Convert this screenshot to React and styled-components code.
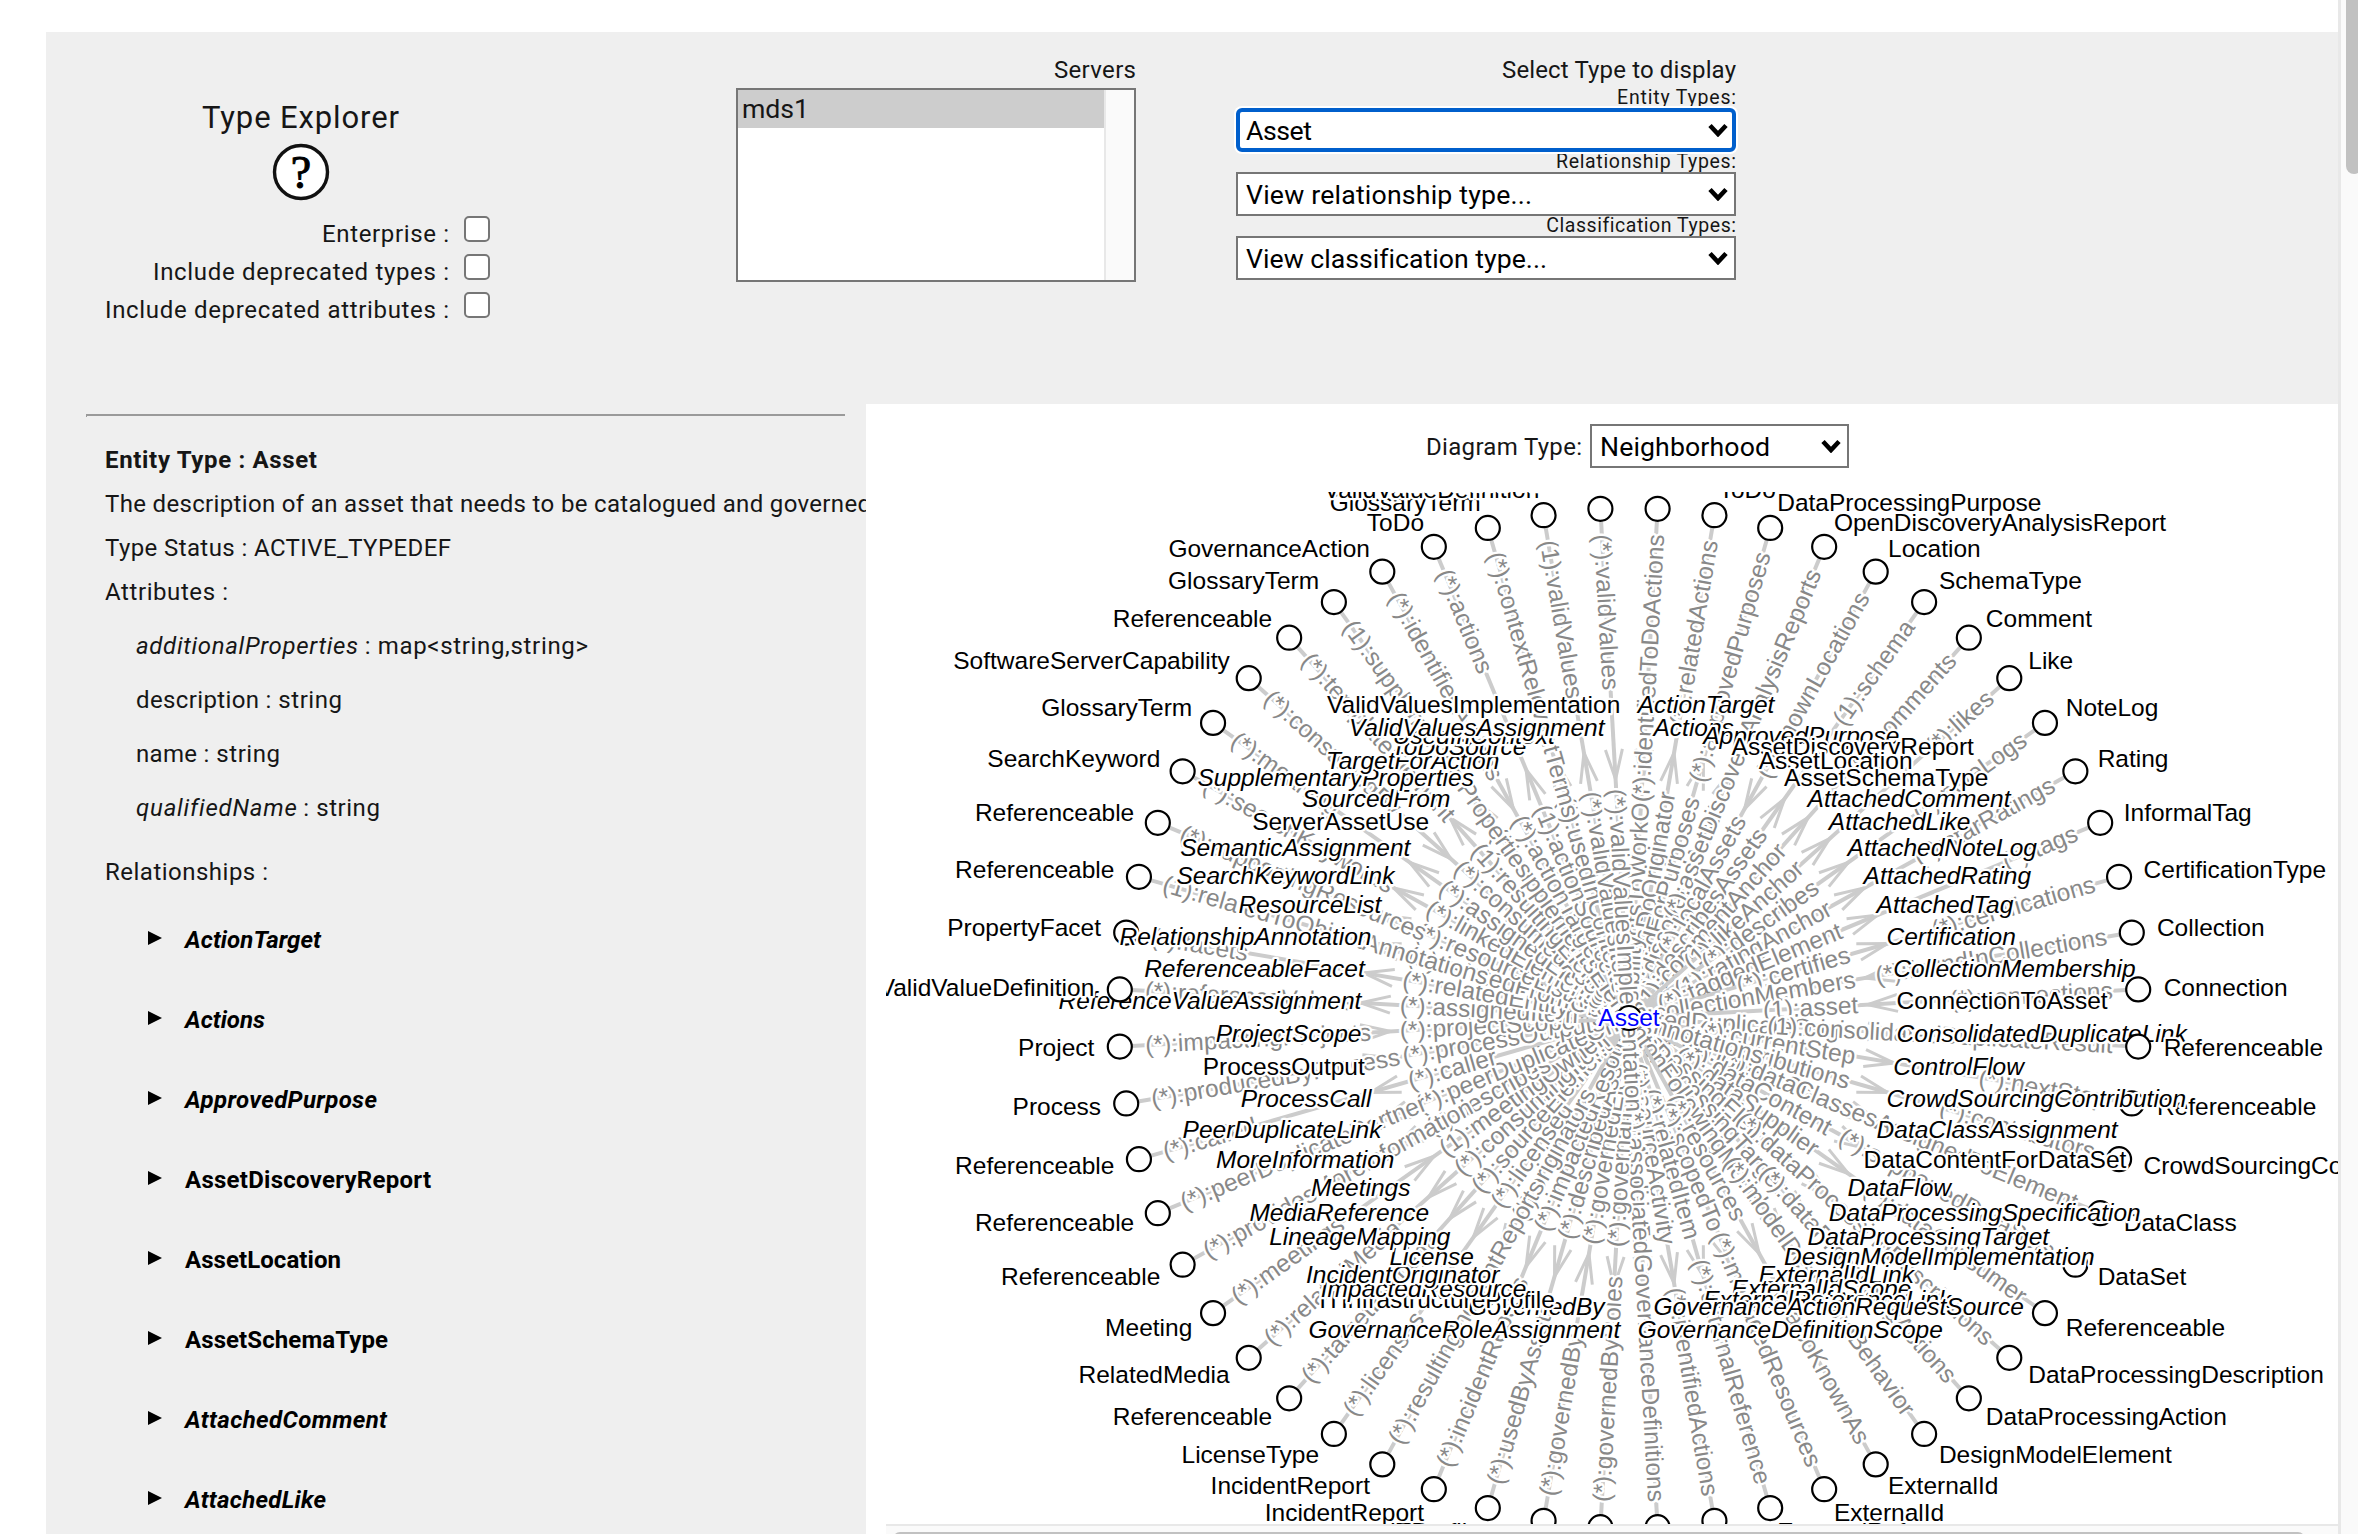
import React, { useLayoutEffect, useRef, useState } from "react";
import styled, { createGlobalStyle, css } from "styled-components";

const GlobalStyle = createGlobalStyle`
  * { box-sizing: border-box; }
  html, body { margin: 0; padding: 0; background: #fff; overflow: hidden; }
  body { font-family: Roboto, "Noto Sans", sans-serif; color: #161616; }
`;

const Page = styled.div`
  display: flex;
  width: 2358px;
  height: 1534px;
  overflow: hidden;
`;
const Main = styled.main`
  display: flex;
  flex-direction: column;
  width: 2292px;
  margin: 32px 0 0 46px;
  background: #efefef;
`;
const PageScroll = styled.div`
  width: 20px;
  height: 1534px;
  border-left: 3px solid #e8e8e8;
  background: #fafafa;
  padding-left: 5px;
  overflow: hidden;
`;
const PageThumb = styled.div`
  width: 16px;
  height: 174px;
  border-radius: 0 0 8px 8px;
  background: #c1c1c1;
`;

/* ---------- header ---------- */
const Header = styled.header`
  display: flex;
  height: 372px;
`;
const TitleColumn = styled.div`
  display: flex;
  flex-direction: column;
  align-items: center;
  width: 509px;
  padding-top: 66px;
`;
const Title = styled.h1`
  margin: 0 0 5px;
  font-size: 31px;
  font-weight: 400;
  line-height: 40px;
  white-space: nowrap;
`;
const HelpIcon = styled.svg`
  display: block;
  width: 58px;
  height: 58px;
  margin-bottom: 9px;
`;
const HelpGlyph = styled.text`
  font: 400 46px "Liberation Serif", serif;
  text-anchor: middle;
  stroke: #000;
  stroke-width: 1px;
`;
const Options = styled.div`
  align-self: flex-start;
  width: 444px;
`;
const OptionRow = styled.label`
  display: flex;
  justify-content: flex-end;
  height: 38px;
  gap: 15px;
`;
const OptionText = styled.span`
  margin-top: 10px;
  font-size: 24px;
  line-height: 29px;
  white-space: nowrap;
`;
const Checkbox = styled.span`
  width: 26px;
  height: 26px;
  margin-top: 6px;
  border: 2px solid #767676;
  border-radius: 5px;
  background: #fff;
`;
const Column = styled.div`
  display: flex;
  flex-direction: column;
  align-items: stretch;
  width: ${(p) => p.$width}px;
  margin-left: ${(p) => p.$gap}px;
  padding-top: 24px;
`;
const ColumnTitle = styled.div`
  margin-bottom: 4px;
  font-size: 24px;
  line-height: 28px;
  text-align: right;
  white-space: nowrap;
`;
const ListBox = styled.div`
  display: flex;
  height: 194px;
  border: 2px solid #767676;
  background: #fff;
`;
const ListItems = styled.div`
  flex: 1;
`;
const ListItem = styled.div`
  height: 38px;
  padding-left: 4px;
  background: #cdcdcd;
  font-size: 26.67px;
  line-height: 38px;
`;
const ListScroll = styled.div`
  width: 30px;
  border-left: 2px solid #e8e8e8;
  background: #fafafa;
`;
const SelectLabel = styled.div`
  height: 20px;
  font-size: 19.5px;
  line-height: 20px;
  text-align: right;
  white-space: nowrap;
`;
const TypeSelects = styled.div`
  width: 500px;
`;
const SelectBox = styled.div`
  position: relative;
  display: flex;
  align-items: center;
  justify-content: space-between;
  width: ${(p) => p.$width}px;
  height: 44px;
  padding: 0 6px 0 8px;
  border: 2px solid #767676;
  background: #fff;
  color: #000;
  font-size: 26.67px;
  line-height: 40px;
  white-space: nowrap;
  ${(p) =>
    p.$focused &&
    css`
      padding: 0 4px 0 6px;
      border: 4px solid #005fcc;
      border-radius: 6px;
      line-height: 36px;
      box-shadow: 0 0 0 2px #fff;
    `}
`;
const SelectValue = styled.span`
  padding-top: 1px;
`;
const Chevron = styled.svg`
  width: 20px;
  height: 14px;
  fill: none;
  stroke: #000;
  stroke-width: 4.6;
`;

/* ---------- details panel ---------- */
const Body = styled.div`
  display: flex;
  height: 1130px;
`;
const Details = styled.section`
  width: 820px;
  overflow: hidden;
  white-space: nowrap;
  font-size: 24px;
`;
const Rule = styled.hr`
  width: 759px;
  height: 3px;
  margin: 10px 0 21px 40px;
  border: 0;
  border-top: 2px solid #9a9a9a;
  border-left: 1px solid #9a9a9a;
`;
const Line = styled.div`
  height: 44px;
  padding-left: 59px;
  line-height: 44px;
  font-weight: ${(p) => (p.$bold ? 700 : 400)};
`;
const Attributes = styled.div`
  padding: 5px 0 15px 90px;
`;
const Attribute = styled.div`
  height: 54px;
  line-height: 54px;
`;
const Relationships = styled.div`
  padding: 6px 0 0 102px;
`;
const Relationship = styled.div`
  display: flex;
  align-items: center;
  gap: 23px;
  height: 80px;
  color: #000;
  font-weight: 700;
  font-style: ${(p) => (p.$italic ? "italic" : "normal")};
`;
const Triangle = styled.span`
  width: 0;
  height: 0;
  margin-top: -4px;
  border-style: solid;
  border-width: 7px 0 7px 14px;
  border-color: transparent transparent transparent #000;
`;

/* ---------- diagram panel ---------- */
const DiagramPanel = styled.section`
  display: flex;
  flex-direction: column;
  width: 1472px;
  background: #fff;
`;
const DiagramBar = styled.div`
  display: flex;
  align-items: center;
  gap: 8px;
  height: 88px;
  padding: 20px 0 24px 560px;
  font-size: 24px;
`;
const BarLabel = styled.span`
  padding-top: 1px;
  line-height: 44px;
  white-space: nowrap;
`;
const Canvas = styled.svg`
  display: block;
  width: 1452px;
  height: 1032px;
  margin-left: 20px;
  font-family: "Liberation Sans", Arial, sans-serif;
  font-size: 24.5px;
`;
const CanvasScroll = styled.div`
  height: 10px;
  margin-left: 20px;
  padding: 6px 0 0 7px;
  border-top: 2px solid #e8e8e8;
  background: #fafafa;
  overflow: hidden;
`;
const CanvasThumb = styled.div`
  width: 1412px;
  height: 14px;
  border-radius: 7px;
  background: #c1c1c1;
`;
const Link = styled.line`
  stroke: #ccc;
  stroke-width: 4;
`;
const Arrow = styled.path`
  fill: none;
  stroke: #ccc;
  stroke-width: 3;
`;
const halo = css`
  paint-order: stroke;
  stroke: #fff;
  stroke-width: 4.6px;
  stroke-linejoin: round;
`;
const RoleText = styled.text`
  ${halo}
  fill: #888;
`;
const Label = styled.text`
  ${halo}
  fill: ${(p) => p.$color || "#000"};
  font-style: ${(p) => (p.$italic ? "italic" : "normal")};
`;
const NodeCircle = styled.circle`
  fill: #fff;
  stroke: #000;
  stroke-width: 2.2;
`;

/* Tracks its text so that it fills the given measure. */
function Tracked({ width, children }) {
  const ref = useRef(null);
  const [spacing, setSpacing] = useState(0);
  useLayoutEffect(() => {
    const natural = ref.current.getBoundingClientRect().width;
    setSpacing((width - natural) / (ref.current.textContent.length - 1));
  }, [width]);
  return (
    <span ref={ref} style={{ letterSpacing: spacing, marginRight: -spacing }}>
      {children}
    </span>
  );
}

// [relationship, neighbour, inner role, outer role, upright name, arrow points inwards]
const LINKS = [
  ["ActionTarget", "ToDo", "(*):elementsToWorkOn", "(*):identifiedToDoActions", 0, 1],
  ["Actions", "ToDo", "(1):toDoOriginator", "(*):relatedActions"],
  ["ApprovedPurpose", "DataProcessingPurpose", "(*):approvedForPurposes", "(*):approvedPurposes"],
  ["AssetDiscoveryReport", "OpenDiscoveryAnalysisReport", "(1):discoveredAsset", "(*):assetDiscoveryAnalysisReports", 1],
  ["AssetLocation", "Location", "(*):localAssets", "(*):knownLocations", 1, 1],
  ["AssetSchemaType", "SchemaType", "(1):describesAssets", "(1):schema", 1],
  ["AttachedComment", "Comment", "(1):commentAnchor", "(*):comments"],
  ["AttachedLike", "Like", "(1):likeAnchor", "(*):likes"],
  ["AttachedNoteLog", "NoteLog", "(*):describes", "(*):noteLogs"],
  ["AttachedRating", "Rating", "(1):ratingAnchor", "(*):starRatings"],
  ["AttachedTag", "InformalTag", "(*):taggedElement", "(*):tags"],
  ["Certification", "CertificationType", "(*):certifies", "(*):certifications"],
  ["CollectionMembership", "Collection", "(*):collectionMembers", "(*):foundInCollections", 0, 1],
  ["ConnectionToAsset", "Connection", "(1):asset", "(*):connections", 1, 1],
  ["ConsolidatedDuplicateLink", "Referenceable", "(*):consolidatedDuplicateOrigin", "(1):consolidatedDuplicateResult"],
  ["ControlFlow", "Referenceable", "(*):currentStep", "(*):nextStep"],
  ["CrowdSourcingContribution", "CrowdSourcingContributor", "(*):contributions", "(*):contributors"],
  ["DataClassAssignment", "DataClass", "(*):elementsAssignedToDataClass", "(*):dataClassesAssignedToElement"],
  ["DataContentForDataSet", "DataSet", "(*):dataContent", "(*):supportedDataSets", 1],
  ["DataFlow", "Referenceable", "(*):dataSupplier", "(*):dataConsumer"],
  ["DataProcessingSpecification", "DataProcessingDescription", "(*):dataProcessingElements", "(*):dataProcessingDescriptions"],
  ["DataProcessingTarget", "DataProcessingAction", "(*):dataProcessingTarget", "(*):dataProcessingActions"],
  ["DesignModelImplementation", "DesignModelElement", "(*):implementationFollowingModel", "(*):modelDescribingBehavior"],
  ["ExternalIdLink", "ExternalId", "(*):resources", "(*):alsoKnownAs"],
  ["ExternalIdScope", "ExternalId", "(*):scopedTo", "(*):managedResources"],
  ["ExternalReferenceLink", "ExternalReference", "(*):relatedItem", "(*):externalReference"],
  ["GovernanceActionRequestSource", "GovernanceAction", "(*):sourceActivity", "(*):identifiedActions"],
  ["GovernanceDefinitionScope", "GovernanceDefinition", "(*):definitionAppliesTo", "(*):associatedGovernanceDefinitions"],
  ["GovernanceRoleAssignment", "PersonRole", "(*):governanceResponsibility", "(*):governedByRoles"],
  ["GovernedBy", "GovernanceDefinition", "(*):governedElements", "(*):governedBy", 0, 1],
  ["ITInfrastructureProfile", "ITProfile", "(*):describedAssets", "(*):usedByAssets", 1],
  ["ImpactedResource", "IncidentReport", "(*):impactedResources", "(*):incidentReports"],
  ["IncidentOriginator", "IncidentReport", "(*):originators", "(*):resultingIncidentReports"],
  ["License", "LicenseType", "(*):licensed", "(*):licenses"],
  ["LineageMapping", "Referenceable", "(*):sourceElement", "(*):targetElement"],
  ["MediaReference", "RelatedMedia", "(*):consumingItem", "(*):relatedMedia"],
  ["Meetings", "Meeting", "(1):meetingOwner", "(*):meetings", 0, 1],
  ["MoreInformation", "Referenceable", "(*):describes", "(*):providesMoreInformation"],
  ["PeerDuplicateLink", "Referenceable", "(*):peerDuplicateOrigin", "(*):peerDuplicatePartner"],
  ["ProcessCall", "Referenceable", "(*):caller", "(*):called"],
  ["ProcessOutput", "Process", "(*):processOutputs", "(*):producedByProcess", 1, 1],
  ["ProjectScope", "Project", "(*):projectScope", "(*):impactingProjects", 0, 1],
  ["ReferenceValueAssignment", "ValidValueDefinition", "(*):assignedItem", "(*):referenceValues"],
  ["ReferenceableFacet", "PropertyFacet", "(*):relatedEntity", "(*):facets"],
  ["RelationshipAnnotation", "Referenceable", "(1):relatedFromObjectAnnotations", "(1):relatedToObjectAnnotations"],
  ["ResourceList", "Referenceable", "(*):resourceListAnchors", "(*):supportingResources"],
  ["SearchKeywordLink", "SearchKeyword", "(*):linkedElements", "(*):searchKeywords"],
  ["SemanticAssignment", "GlossaryTerm", "(*):assignedElements", "(*):meaning"],
  ["ServerAssetUse", "SoftwareServerCapability", "(*):consumedAsset", "(*):consumedBy", 1, 1],
  ["SourcedFrom", "Referenceable", "(1):resultingElement", "(*):templateElement"],
  ["SupplementaryProperties", "GlossaryTerm", "(*):supplementsElement", "(1):supplementaryProperties"],
  ["TargetForAction", "GovernanceAction", "(*):actionTarget", "(*):identifiedActions", 0, 1],
  ["ToDoSource", "ToDo", "(1):actionSource", "(*):actions"],
  ["UsedInContext", "GlossaryTerm", "(*):usedInContexts", "(*):contextRelevantTerms"],
  ["ValidValuesAssignment", "ValidValueDefinition", "(*):validValuesItem", "(1):validValues"],
  ["ValidValuesImplementation", "ValidValueDefinition", "(*):validValuesImplementation", "(*):validValues", 1, 1],
];

const CX = 1629;
const CY = 1018;
const RING = 510;
const BASE = 1025.8;

// Links next to the vertical axis have their name pushed off the spokes.
function namePosition(index, sin, cos) {
  const fromAxis = Math.min(index % 28, 27 - (index % 28));
  const side = Math.sign(sin);
  if (fromAxis === 0) return [CX + side * 8.7, BASE - Math.sign(cos) * 312.5];
  const y = BASE - 293.6 * cos;
  if (fromAxis === 1) return [CX + side * 24.5, y];
  return [CX + 268 * sin, y];
}

const SPOKES = LINKS.map(([name, node, inner, outer, upright, inwards], i) => {
  const angle = ((i + 0.5) * 2 * Math.PI) / LINKS.length;
  const sin = Math.sin(angle);
  const cos = Math.cos(angle);
  return {
    id: i, name, node, inner, outer, upright, inwards, sin, cos,
    right: sin > 0,
    degrees: (angle * 180) / Math.PI - 90,
    namePos: namePosition(i, sin, cos),
  };
});

function Spoke({ s }) {
  const at = (r) => (s.right ? r : -r);
  const anchor = s.right ? "end" : "start";
  return (
    <g>
      <g transform={`translate(${CX} ${CY}) rotate(${s.degrees})`}>
        <Link x1={12} x2={RING - 12} />
        <Arrow d={s.inwards ? "M269 -8.5L239 0L269 8.5" : "M239 -8.5L269 0L239 8.5"} />
      </g>
      <g transform={`translate(${CX} ${CY}) rotate(${s.right ? s.degrees : s.degrees - 180})`}>
        <RoleText x={at(229.5)} y={8} textAnchor={anchor}>{s.inner}</RoleText>
        <RoleText x={at(484.5)} y={8} textAnchor={anchor}>{s.outer}</RoleText>
      </g>
    </g>
  );
}

function Neighbour({ s }) {
  const anchor = s.right ? "start" : "end";
  return (
    <g>
      <Label x={s.namePos[0]} y={s.namePos[1]} textAnchor={anchor} $italic={!s.upright}>{s.name}</Label>
      <NodeCircle cx={CX + RING * s.sin} cy={CY - RING * s.cos} r={12} />
      <Label x={CX + 535.5 * s.sin} y={BASE - 535.5 * s.cos} textAnchor={anchor}>{s.node}</Label>
    </g>
  );
}

function Diagram() {
  return (
    <Canvas viewBox="886 492 1452 1032">
      {SPOKES.map((s) => <Spoke key={s.id} s={s} />)}
      {SPOKES.map((s) => <Neighbour key={s.id} s={s} />)}
      <NodeCircle cx={CX} cy={CY} r={12} />
      <Label x={CX} y={1025.5} textAnchor="middle" $color="#00f">Asset</Label>
    </Canvas>
  );
}

function Select({ value, measure, width, focused }) {
  return (
    <SelectBox $width={width} $focused={focused}>
      <SelectValue><Tracked width={measure}>{value}</Tracked></SelectValue>
      <Chevron viewBox="0 0 20 14"><path d="M2 2.5L10 11L18 2.5" /></Chevron>
    </SelectBox>
  );
}

const OPTIONS = [
  ["Enterprise :", 127],
  ["Include deprecated types :", 296],
  ["Include deprecated attributes :", 344],
];
const SELECTS = [
  ["Entity Types:", 119, "Asset", 66],
  ["Relationship Types:", 180, "View relationship type...", 286],
  ["Classification Types:", 189, "View classification type...", 300],
];
const ATTRIBUTES = [
  ["additionalProperties", 222, " : map<string,string>", true],
  ["description", 123, " : string", false],
  ["name", 61, " : string", false],
  ["qualifiedName", 160, " : string", true],
];
const RELATIONSHIPS = [
  ["ActionTarget", 136, true],
  ["Actions", 80, true],
  ["ApprovedPurpose", 192, true],
  ["AssetDiscoveryReport", 246, false],
  ["AssetLocation", 156, false],
  ["AssetSchemaType", 203, false],
  ["AttachedComment", 202, true],
  ["AttachedLike", 141, true],
];
const SUFFIX_WIDTH = { " : string": 83, " : map<string,string>": 230 };

export default function App() {
  return (
    <Page>
      <GlobalStyle />
      <Main>
        <Header>
          <TitleColumn>
            <Title><Tracked width={197}>Type Explorer</Tracked></Title>
            <HelpIcon viewBox="0 0 58 58">
              <circle cx="29" cy="29" r="26.5" fill="#fff" stroke="#111" strokeWidth="3.4" />
              <HelpGlyph x="29" y="45">?</HelpGlyph>
            </HelpIcon>
            <Options>
              {OPTIONS.map(([text, w]) => (
                <OptionRow key={text}>
                  <OptionText><Tracked width={w}>{text}</Tracked></OptionText>
                  <Checkbox />
                </OptionRow>
              ))}
            </Options>
          </TitleColumn>
          <Column $width={400} $gap={181}>
            <ColumnTitle><Tracked width={82}>Servers</Tracked></ColumnTitle>
            <ListBox>
              <ListItems>
                <ListItem><Tracked width={67}>mds1</Tracked></ListItem>
              </ListItems>
              <ListScroll />
            </ListBox>
          </Column>
          <Column $width={500} $gap={100}>
            <ColumnTitle><Tracked width={234}>Select Type to display</Tracked></ColumnTitle>
            <TypeSelects>
              {SELECTS.map(([label, lw, value, vw], i) => (
                <React.Fragment key={label}>
                  <SelectLabel><Tracked width={lw}>{label}</Tracked></SelectLabel>
                  <Select value={value} measure={vw} width={500} focused={i === 0} />
                </React.Fragment>
              ))}
            </TypeSelects>
          </Column>
        </Header>
        <Body>
          <Details>
            <Rule />
            <Line $bold><Tracked width={212}>Entity Type : Asset</Tracked></Line>
            <Line><Tracked width={766}>The description of an asset that needs to be catalogued and governed</Tracked></Line>
            <Line><Tracked width={346}>Type Status : ACTIVE_TYPEDEF</Tracked></Line>
            <Line><Tracked width={123}>Attributes :</Tracked></Line>
            <Attributes>
              {ATTRIBUTES.map(([name, w, suffix, italic]) => (
                <Attribute key={name}>
                  <Tracked width={w}>{italic ? <i>{name}</i> : name}</Tracked>
                  <Tracked width={SUFFIX_WIDTH[suffix]}>{suffix}</Tracked>
                </Attribute>
              ))}
            </Attributes>
            <Line><Tracked width={163}>Relationships :</Tracked></Line>
            <Relationships>
              {RELATIONSHIPS.map(([name, w, italic]) => (
                <Relationship key={name} $italic={italic}>
                  <Triangle />
                  <Tracked width={w}>{name}</Tracked>
                </Relationship>
              ))}
            </Relationships>
          </Details>
          <DiagramPanel>
            <DiagramBar>
              <BarLabel><Tracked width={156}>Diagram Type:</Tracked></BarLabel>
              <Select value="Neighborhood" measure={170} width={259} />
            </DiagramBar>
            <Diagram />
            <CanvasScroll><CanvasThumb /></CanvasScroll>
          </DiagramPanel>
        </Body>
      </Main>
      <PageScroll><PageThumb /></PageScroll>
    </Page>
  );
}
